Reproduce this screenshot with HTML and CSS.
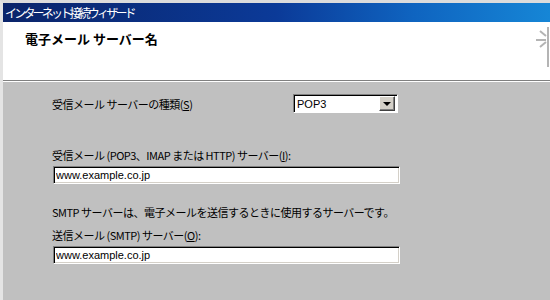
FILE: index.html
```html
<!DOCTYPE html>
<html lang="ja">
<head>
  <meta charset="UTF-8">
  <title>インターネット接続ウィザード</title>
  <link rel="stylesheet" href="styles.css">
</head>
<body>

  <div class="window">
    <div class="titlebar">インターネット接続ウィザード</div>

    <div class="header">
      <h1>電子メール サーバー名</h1>
      <svg class="header-icon" width="16" height="40" viewBox="0 0 16 40">
        <path d="M14 0 V40 M6 4 L12 9 M2 13 H12 M6 20 L12 15" stroke="#b4b4b4" stroke-width="2" fill="none"/>
      </svg>
    </div>

    <div class="content">
      <div class="type-row">
        <label class="type-label">受信メール サーバーの種類(<u>S</u>)</label>
        <div class="combo">
          <span class="combo-value">POP3</span>
          <span class="combo-btn"><span class="arrow"></span></span>
        </div>
      </div>

      <label class="field-label incoming">受信メール (POP3、IMAP または HTTP) サーバー(<u>I</u>):</label>
      <input class="field" type="text" value="www.example.co.jp">

      <p class="note">SMTP サーバーは、電子メールを送信するときに使用するサーバーです。</p>

      <label class="field-label">送信メール (SMTP) サーバー(<u>O</u>):</label>
      <input class="field" type="text" value="www.example.co.jp">
    </div>
  </div>

</body>
</html>
```

FILE: styles.css
```css
body {
  margin: 0;
  font-family: "MS UI Gothic", "Noto Sans CJK JP", sans-serif;
  font-size: 11px;
  color: #000;
  background: #c0c0c0;
}

.window {
  height: 300px;
  border-top: 3px solid #dcdcdc;
  border-left: 3px solid #e4e4e4;
  box-sizing: border-box;
  background: #c0c0c0;
  overflow: hidden;
}

.titlebar {
  height: 19px;
  line-height: 19px;
  padding-left: 2px;
  color: #fff;
  font-size: 12px;
  letter-spacing: -2.8px;
  background: linear-gradient(to right, #0a246a, #0b3a98 50%, #0f64c0 75%, #1686d6);
}

.header {
  height: 58px;
  background: #fff;
  border-bottom: 1px solid #808080;
  box-shadow: 0 1px 0 #fff;
  display: flex;
  justify-content: space-between;
  align-items: flex-start;
}

.header h1 {
  margin: 9px 0 0 22px;
  font-size: 13px;
  font-weight: bold;
  line-height: 16px;
}

.header-icon {
  margin-top: 5px;
}

.content {
  padding: 13px 0 0 49px;
  letter-spacing: -0.5px;
}

.type-row {
  display: flex;
  align-items: center;
  height: 19px;
}

.type-label {
  width: 241px;
}

.combo {
  width: 105px;
  height: 19px;
  box-sizing: border-box;
  background: #fff;
  border-top: 1px solid #808080;
  border-left: 1px solid #808080;
  border-right: 1px solid #fff;
  border-bottom: 1px solid #fff;
  box-shadow: inset 1px 1px 0 #000;
  display: flex;
  align-items: center;
  justify-content: space-between;
  padding: 1px 2px 1px 3px;
}

.combo-value {
  font-family: "Liberation Sans", sans-serif;
  font-size: 11px;
  letter-spacing: 0;
}

.combo-btn {
  width: 16px;
  height: 15px;
  box-sizing: border-box;
  background: #d4d0c8;
  border-top: 1px solid #fff;
  border-left: 1px solid #fff;
  border-right: 1px solid #404040;
  border-bottom: 1px solid #404040;
  box-shadow: inset -1px -1px 0 #808080;
  display: flex;
  align-items: center;
  justify-content: center;
}

.arrow {
  width: 0;
  height: 0;
  border-left: 4px solid transparent;
  border-right: 4px solid transparent;
  border-top: 4px solid #000;
}

.field-label {
  display: block;
  line-height: 15px;
}

.incoming {
  margin-top: 35px;
}

.field {
  display: block;
  width: 347px;
  height: 18px;
  margin: 3px 0 0 1px;
  padding: 0 2px;
  box-sizing: border-box;
  font-family: "Liberation Sans", sans-serif;
  font-size: 11px;
  letter-spacing: 0;
  background: #fff;
  border-top: 1px solid #808080;
  border-left: 1px solid #808080;
  border-right: 1px solid #fff;
  border-bottom: 1px solid #fff;
  box-shadow: inset 1px 1px 0 #000, inset -1px -1px 0 #d4d0c8;
  outline: none;
}

.note {
  margin: 21px 0 8px;
  line-height: 15px;
}
```
